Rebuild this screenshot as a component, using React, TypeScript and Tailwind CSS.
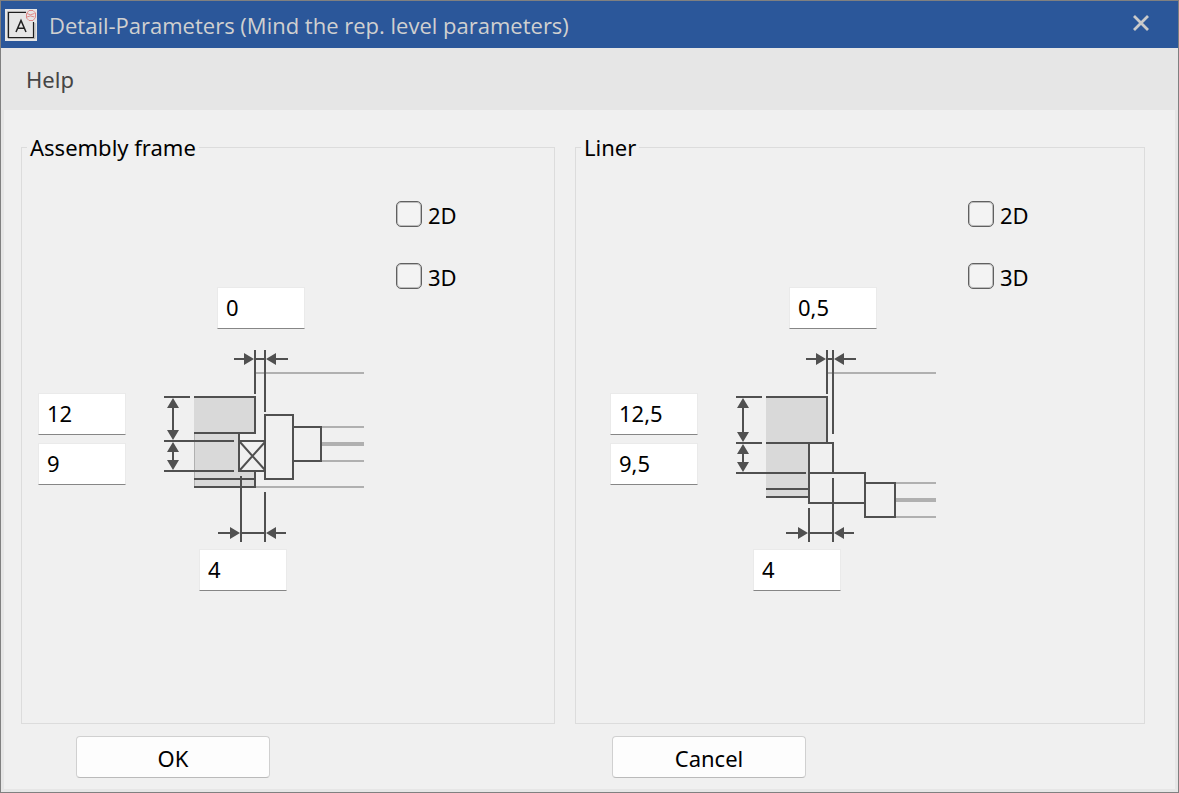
import { useId } from "react";
import type { ReactNode } from "react";

const DARK = "#505050";
const LIGHT = "#b0b0b0";
const FILL = "#d9d9d9";

function AppIcon() {
  return (
    <svg className="w-8 h-8" viewBox="0 0 32 32" aria-hidden="true">
      <rect width="32" height="32" fill="#e6e6e6" />
      <path d="M2.5 29V2.5H21M30 14V29.5H3" fill="none" stroke="#b4b4b4" strokeWidth="1" />
      <path d="M21 3.5H3.5V28.5H28.5V13" fill="none" stroke="#1e1e1e" strokeWidth="1.2" />
      <path d="M11 23L16 11.5L21 23M12.8 19.2H19.2" fill="none" stroke="#222" strokeWidth="1.5" />
      <g fill="none" stroke="#dc7f7f" strokeWidth="0.9">
        <path d="M24 1.5H28L30.5 4V8.5L28 11.5H24L21.5 9V4.5Z" />
        <path d="M22 4.5Q25 7 29.5 4.5M22 8Q25 5.8 29.5 8" />
      </g>
    </svg>
  );
}

function AssemblyDrawing() {
  return (
    <svg className="w-[200px] h-[194px] shrink-0" viewBox="0 0 200 194" role="img" aria-label="Assembly frame">
      <path d="M30 48H91V84H75V122H91V138H30Z" fill={FILL} />
      <path d="M92 24H200M92 138H200M158 78H200M158 112H200" stroke={LIGHT} strokeWidth="2" />
      <path d="M158 95H200" stroke={LIGHT} strokeWidth="4" />
      <path d="M30.5 84V138" stroke={LIGHT} strokeWidth="1" />
      <g fill="none" stroke={DARK} strokeWidth="2">
        {/* wall */}
        <path d="M30 48H91V84H30M75 84V92M30 130H91M30 138H91V122" />
        {/* frame and sash */}
        <path d="M75 92H101V122H75ZM76 93L101 121M101 93L76 121" />
        <path d="M101 66H129V130H101ZM129 78H157V112H129Z" />
        {/* dimension lines */}
        <path d="M91 1V45M101 1V63M70 10H82M91 10H101M110 10H124" />
        <path d="M0 48H26M0 92H70M0 122H70M9 56V84M9 100V114" />
        <path d="M77 127V193M101 143V193M54 184H68M77 184H101M110 184H122" />
      </g>
      <g fill={DARK}>
        <path d="M80 4L90 10L80 16ZM112 4L102 10L112 16Z" />
        <path d="M3 59L9 49L15 59ZM3 81L9 91L15 81Z" />
        <path d="M3 103L9 93L15 103ZM3 111L9 121L15 111Z" />
        <path d="M66 178L76 184L66 190ZM112 178L102 184L112 190Z" />
      </g>
    </svg>
  );
}

function LinerDrawing() {
  return (
    <svg className="w-[200px] h-[194px] shrink-0" viewBox="0 0 200 194" role="img" aria-label="Liner">
      <path d="M30 48H91V94H73V148H30Z" fill={FILL} />
      <path d="M92 24H200M160 134H200M160 168H200" stroke={LIGHT} strokeWidth="2" />
      <path d="M160 151H200" stroke={LIGHT} strokeWidth="4" />
      <g fill="none" stroke={DARK} strokeWidth="2">
        {/* wall */}
        <path d="M30 48H91V94M30 94H98M97 94V124M30 140H73M30 148H73" />
        {/* frame and sash */}
        <path d="M73 94V154H129M73 124H129V168H159V134H129" />
        {/* dimension lines */}
        <path d="M91 1V45M97 1V85M70 10H82M91 10H97M106 10H120" />
        <path d="M0 48H26M0 94H26M0 124H70M7 56V86M7 102V116" />
        <path d="M73 159V193M97 129V193M50 184H64M73 184H97M106 184H118" />
      </g>
      <g fill={DARK}>
        <path d="M80 4L90 10L80 16ZM108 4L98 10L108 16Z" />
        <path d="M1 59L7 49L13 59ZM1 83L7 93L13 83Z" />
        <path d="M1 105L7 95L13 105ZM1 113L7 123L13 113Z" />
        <path d="M62 178L72 184L62 190ZM108 178L98 184L108 190Z" />
      </g>
    </svg>
  );
}

function Check({ label }: { label: string }) {
  const id = useId();
  return (
    <div className="flex items-center gap-1.5 h-[26px]">
      <input
        id={id}
        type="checkbox"
        className="appearance-none w-[26px] h-[26px] rounded-[5px] border border-[#606060] inset-ring inset-ring-[#bcbcbc] bg-[#f3f3f3] checked:bg-[#2b579a]"
      />
      <label htmlFor={id} className="pt-0.5">
        {label}
      </label>
    </div>
  );
}

function Field({ label, value, className = "" }: { label: string; value: string; className?: string }) {
  return (
    <input
      type="text"
      aria-label={label}
      defaultValue={value}
      className={`block w-[88px] h-[42px] px-2 pb-[3px] bg-white border border-[#eaeaea] border-b-[#868686] outline-none ${className}`}
    />
  );
}

type GroupProps = {
  title: string;
  values: string[];
  inset: string;
  lastInset: string;
  children: ReactNode;
};

function Group({ title, values, inset, lastInset, children }: GroupProps) {
  return (
    <fieldset className="min-w-0 border border-[#dcdcdc]">
      <legend className="ml-[5px] px-[3px] leading-[28px]">{title}</legend>
      <div className={`pt-10 ${inset}`}>
        <div className="flex items-end">
          <Field label="Top gap" value={values[0]} className="ml-[179px]" />
          <div className="flex flex-col gap-9 ml-[91px] pb-10">
            <Check label="2D" />
            <Check label="3D" />
          </div>
        </div>
        <div className="flex mt-5">
          <div className="flex flex-col gap-2 pt-11 mr-[38px]">
            <Field label="Upper depth" value={values[1]} />
            <Field label="Lower depth" value={values[2]} />
          </div>
          {children}
        </div>
        <Field label="Bottom gap" value={values[3]} className={`mt-1.5 ${lastInset}`} />
      </div>
    </fieldset>
  );
}

const buttonClass =
  "w-[194px] h-[42px] pt-0.5 rounded-[4px] border border-[#d0d0d0] border-b-[#bababa] bg-[#fdfdfd]";

export default function App() {
  return (
    <div className="min-h-screen flex flex-col border border-[#808080] bg-[#e6e6e6] text-[22px] text-black font-['Noto_Sans','Open_Sans',sans-serif]">
      {/* title bar */}
      <header className="flex items-center h-[47px] pl-1 pr-7 bg-[#2b579a] text-[#d0d0d0]">
        <AppIcon />
        <h1 className="ml-3 pt-0.5 font-['Open_Sans','Noto_Sans',sans-serif]">
          Detail-Parameters (Mind the rep. level parameters)
        </h1>
        <button type="button" aria-label="Close" className="ml-auto pb-1">
          <svg className="w-[18px] h-[18px]" viewBox="0 0 18 18" aria-hidden="true">
            <path d="M2 2L16 16M16 2L2 16" stroke="#cacaca" strokeWidth="2.8" />
          </svg>
        </button>
      </header>

      {/* menu */}
      <nav className="flex items-center h-[62px] px-[25px] text-[#454545]">
        <button type="button">Help</button>
      </nav>

      <main className="flex-1 flex flex-col mx-[3px] mb-[3px] pt-[23px] pb-[11px] pl-[17px] pr-[30px] bg-[#f0f0f0]">
        <div className="flex-1 grid grid-cols-[534fr_570fr] gap-5">
          <Group title="Assembly frame" values={["0", "12", "9", "4"]} inset="pl-4" lastInset="ml-[161px]">
            <AssemblyDrawing />
          </Group>
          <Group title="Liner" values={["0,5", "12,5", "9,5", "4"]} inset="pl-[34px]" lastInset="ml-[143px]">
            <LinerDrawing />
          </Group>
        </div>

        {/* buttons */}
        <div className="grid grid-cols-[534fr_570fr] gap-5 mt-3">
          <div className="pl-[55px]">
            <button type="button" className={buttonClass}>
              OK
            </button>
          </div>
          <div className="pl-[37px]">
            <button type="button" className={buttonClass}>
              Cancel
            </button>
          </div>
        </div>
      </main>
    </div>
  );
}
